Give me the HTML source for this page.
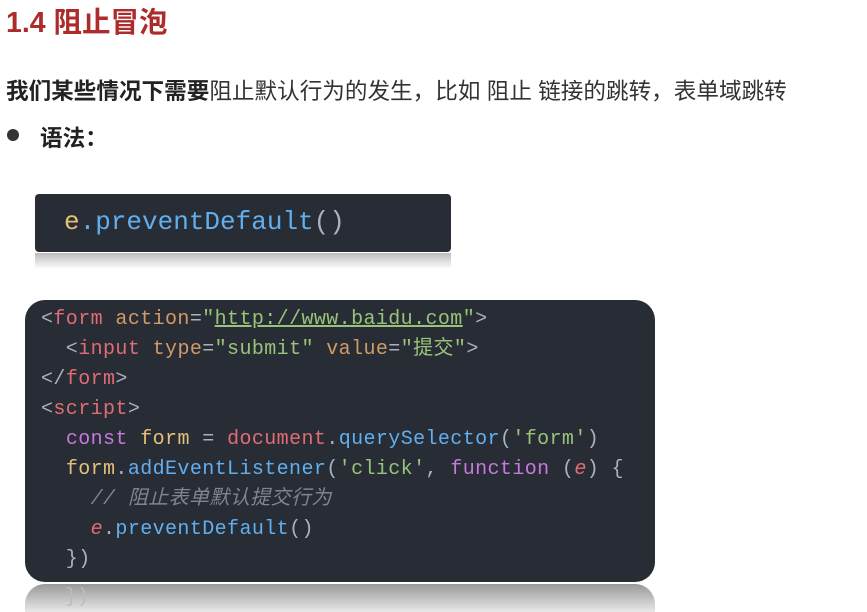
<!DOCTYPE html>
<html><head><meta charset="utf-8"><style>
body{margin:0;width:867px;height:612px;background:#fff;overflow:hidden;position:relative;font-family:"Liberation Sans","Noto Sans CJK SC",sans-serif;color:#333}
.t{position:absolute;left:6px;top:0px;font-size:28.5px;font-weight:bold;color:#ad2b2b;white-space:nowrap}
.p{position:absolute;left:6px;top:73px;font-size:22.6px;white-space:nowrap;color:#333}
.dot{position:absolute;left:7px;top:129px;width:12px;height:12px;border-radius:50%;background:#333}
.g{position:absolute;left:40px;top:120px;font-size:22.6px;font-weight:bold;color:#222}
.box1{position:absolute;left:35px;top:194px;width:416px;height:58px;background:#282c34;border-radius:4px}
.ref1{position:absolute;left:35px;top:253px;width:416px;height:16px;background:linear-gradient(#bbb,#fff)}
.m{font-family:"Liberation Mono","Noto Sans CJK SC",monospace;white-space:pre}
.c1{position:absolute;left:64px;top:207px;font-size:26px;color:#61afef}
.box2{position:absolute;left:25px;top:300px;width:630px;height:282px;background:#282c34;border-radius:20px}
.ref2{position:absolute;left:25px;top:584px;width:630px;height:28px;background:linear-gradient(#999,#e8e8e8);border-radius:20px 20px 0 0}
.code{position:absolute;left:41px;top:305px;font-size:20px;line-height:30px;color:#abb2bf;letter-spacing:0.4px}
.r{color:#e06c75}.o{color:#d19a66}.gr{color:#98c379}.b{color:#61afef}.pu{color:#c678dd}.y{color:#e5c07b}.cm{color:#7f848e;font-style:italic}
</style></head><body>
<div class="t">1.4 阻止冒泡</div>
<div class="p"><b style="color:#222">我们某些情况下需要</b>阻止默认行为的发生，比如 阻止 链接的跳转，表单域跳转</div>
<div class="dot"></div>
<div class="g">语法：</div>
<div class="box1"></div>
<div class="ref1"></div>
<div class="c1 m"><span class="y">e</span>.preventDefault<span style="color:#abb2bf">()</span></div>
<div class="box2"></div>
<div class="ref2"></div>
<div class="m" style="position:absolute;left:65px;top:586px;font-size:20px;color:#bbb">})</div>
<div class="code m">&lt;<span class="r">form</span> <span class="o">action</span>=<span class="gr">"<u style="text-decoration-color:#98c379">http://www.baidu.com</u>"</span>&gt;
  &lt;<span class="r">input</span> <span class="o">type</span>=<span class="gr">"submit"</span> <span class="o">value</span>=<span class="gr">"提交"</span>&gt;
&lt;/<span class="r">form</span>&gt;
&lt;<span class="r">script</span>&gt;
  <span class="pu">const</span> <span class="y">form</span> = <span class="r">document</span>.<span class="b">querySelector</span>(<span class="gr">'form'</span>)
  <span class="y">form</span>.<span class="b">addEventListener</span>(<span class="gr">'click'</span>, <span class="pu">function</span> (<span class="r" style="font-style:italic">e</span>) {
    <span class="cm">// 阻止表单默认提交行为</span>
    <span class="r" style="font-style:italic">e</span>.<span class="b">preventDefault</span>()
  })</div>
</body></html>
